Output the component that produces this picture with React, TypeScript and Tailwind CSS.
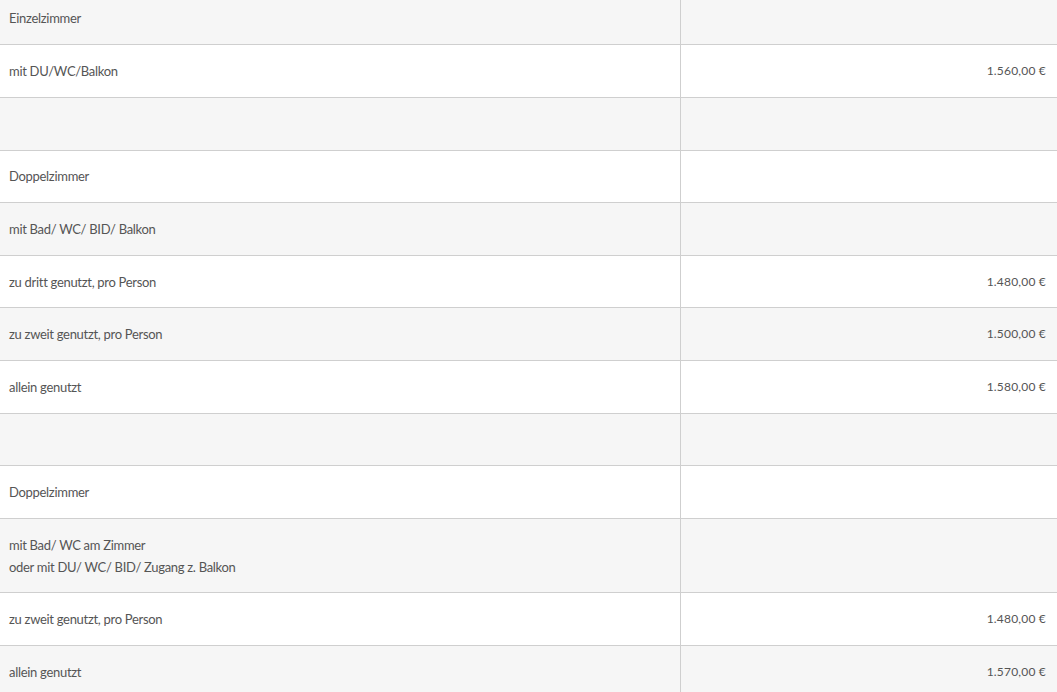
type Row = { label: string[]; price?: string; first?: boolean };

const rows: Row[] = [
  { label: ["Einzelzimmer"], first: true },
  { label: ["mit DU/WC/Balkon"], price: "1.560,00 €" },
  { label: [] },
  { label: ["Doppelzimmer"] },
  { label: ["mit Bad/ WC/ BID/ Balkon"] },
  { label: ["zu dritt genutzt, pro Person"], price: "1.480,00 €" },
  { label: ["zu zweit genutzt, pro Person"], price: "1.500,00 €" },
  { label: ["allein genutzt"], price: "1.580,00 €" },
  { label: [] },
  { label: ["Doppelzimmer"] },
  { label: ["mit Bad/ WC am Zimmer", "oder mit DU/ WC/ BID/ Zugang z. Balkon"] },
  { label: ["zu zweit genutzt, pro Person"], price: "1.480,00 €" },
  { label: ["allein genutzt"], price: "1.570,00 €" },
];

export default function App() {
  return (
    <div className="h-[692px] w-[1057px] overflow-hidden bg-white font-['Lato',sans-serif] text-[#555]">
      {rows.map((row, i) => (
        <div
          key={i}
          className={`flex border-b border-[#cfcfcf] ${i % 2 === 0 ? "bg-[#f6f6f6]" : "bg-white"}`}
        >
          <div
            className={`w-[681px] shrink-0 border-r border-[#cfcfcf] pl-[9px] text-[13px] leading-[22px] tracking-[-0.3px] ${
              row.first ? "pt-[7px] pb-[15.4px]" : "py-[14.8px]"
            }`}
          >
            {row.label.length === 0 ? <span>&nbsp;</span> : row.label.map((l, j) => <div key={j}>{l}</div>)}
          </div>
          <div className="flex flex-1 items-center justify-end pr-[11px] text-[12px] tracking-[0.2px]">
            {row.price}
          </div>
        </div>
      ))}
    </div>
  );
}
